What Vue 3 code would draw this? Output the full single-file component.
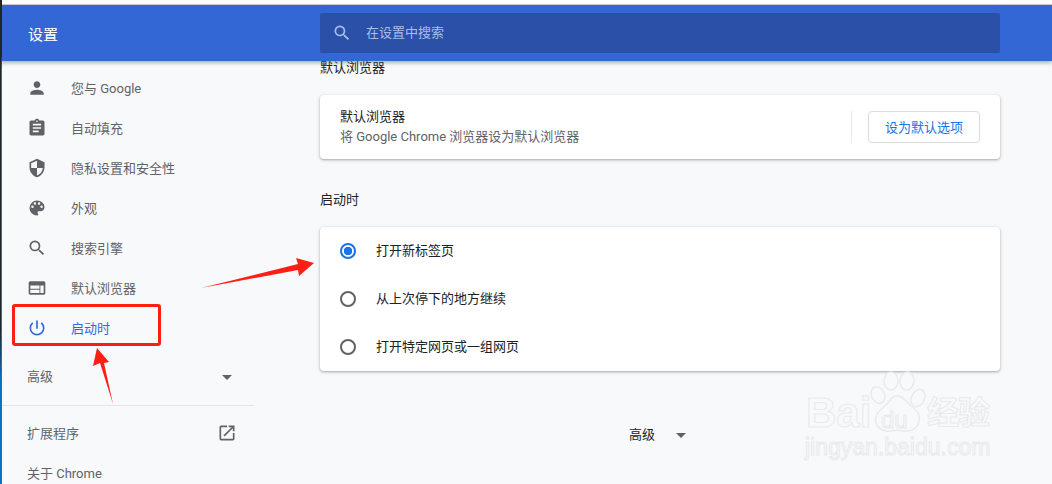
<template>
  <div class="page">
    <div class="edge"></div>
    <div class="top-strip"></div>
    <header class="header">
      <div class="header-title">设置</div>
      <div class="search">
        <svg class="search-icon" viewBox="0 0 24 24"><path d="M15.5 14h-.79l-.28-.27A6.47 6.47 0 0 0 16 9.5 6.5 6.5 0 1 0 9.5 16c1.61 0 3.09-.59 4.23-1.57l.27.28v.79l5 4.99L20.49 19l-4.99-5zm-6 0C7.01 14 5 11.99 5 9.5S7.01 5 9.5 5 14 7.01 14 9.5 11.99 14 9.5 14z"/></svg>
        <span class="lift-2">在设置中搜索</span>
      </div>
    </header>
    <div class="body">
      <aside class="sidebar">
        <div v-for="item in navItems" :key="item.label" class="nav-item" :class="{ active: item.active }">
          <svg class="nav-icon" viewBox="0 0 24 24"><path :d="item.icon"/></svg>
          <span class="lift-1">{{ item.label }}</span>
        </div>
        <div class="advanced-row">
          <span class="lift-1">高级</span>
          <i class="caret"></i>
        </div>
        <div class="divider"></div>
        <div class="link-row">
          <span class="lift-1">扩展程序</span>
          <svg class="open-icon" viewBox="0 0 24 24"><path d="M19 19H5V5h7V3H5a2 2 0 0 0-2 2v14a2 2 0 0 0 2 2h14c1.1 0 2-.9 2-2v-7h-2v7zM14 3v2h3.59l-9.83 9.83 1.41 1.41L19 6.41V10h2V3h-7z"/></svg>
        </div>
        <div class="link-row"><span class="lift-1">关于 Chrome</span></div>
      </aside>
      <main class="main">
        <div class="section-title first">默认浏览器</div>
        <section class="card browser-card">
          <div class="browser-text">
            <div class="browser-name">默认浏览器</div>
            <div class="browser-sub">将 Google Chrome 浏览器设为默认浏览器</div>
          </div>
          <div class="vline"></div>
          <button class="default-btn">设为默认选项</button>
        </section>
        <div class="section-title second">启动时</div>
        <section class="card">
          <div v-for="(opt, i) in startOptions" :key="opt" class="radio-row">
            <span class="radio" :class="{ checked: i === 0 }"></span>
            <span class="lift-2">{{ opt }}</span>
          </div>
        </section>
        <div class="main-advanced">
          <span class="lift-1">高级</span>
          <i class="caret"></i>
        </div>
      </main>
    </div>

    <!-- 标注和水印 -->
    <div class="red-box"></div>
    <svg class="marks" viewBox="0 0 1052 484">
      <polygon fill="#fb1f14" points="201,288 298,264 296,258 314,263 299,276 298,270"/>
      <polygon fill="#fb1f14" points="113,404 100,363 93,366 97,348 109,362 104,363"/>
    </svg>
    <div class="watermark">
      <svg class="paw" viewBox="0 0 60 60">
        <g fill="#f8f9fa" stroke="#e9eaec" stroke-width="1.5">
          <ellipse cx="12" cy="23" rx="6.5" ry="8.5" transform="rotate(-25 12 23)"/>
          <ellipse cx="25" cy="9" rx="7" ry="9"/>
          <ellipse cx="41" cy="9" rx="7" ry="9" transform="rotate(8 41 9)"/>
          <ellipse cx="52" cy="26" rx="6.5" ry="9" transform="rotate(25 52 26)"/>
          <path d="M31 24c6 0 9 5 14 10 5 4 10 8 8 16-2 8-10 10-16 9-4-1-8-1-12 0-7 1-13-2-15-8-2-8 4-13 9-17 5-4 6-10 12-10z"/>
        </g>
      </svg>
      <span class="wm-bai">Bai</span>
      <span class="wm-du">du</span>
      <span class="wm-jy">经验</span>
      <span class="wm-url">jingyan.baidu.com</span>
    </div>
  </div>
</template>

<script setup>
// 左侧菜单
const navItems = [
  { label: '您与 Google', icon: 'M12 12c2.21 0 4-1.79 4-4s-1.79-4-4-4-4 1.79-4 4 1.79 4 4 4zm0 2c-2.67 0-8 1.34-8 4v2h16v-2c0-2.66-5.33-4-8-4z' },
  { label: '自动填充', icon: 'M19 3h-4.18C14.4 1.84 13.3 1 12 1s-2.4.84-2.82 2H5c-1.1 0-2 .9-2 2v14c0 1.1.9 2 2 2h14c1.1 0 2-.9 2-2V5c0-1.1-.9-2-2-2zm-7 0c.55 0 1 .45 1 1s-.45 1-1 1-1-.45-1-1 .45-1 1-1zm2 14H7v-2h7v2zm3-4H7v-2h10v2zm0-4H7V7h10v2z' },
  { label: '隐私设置和安全性', icon: 'M12 1 3 5v6c0 5.55 3.84 10.74 9 12 5.16-1.26 9-6.45 9-12V5l-9-4zm0 10.99h7c-.53 4.12-3.28 7.79-7 8.94V12H5V6.3l7-3.11v8.8z' },
  { label: '外观', icon: 'M12 3a9 9 0 0 0 0 18c.83 0 1.5-.67 1.5-1.5 0-.39-.15-.74-.39-1.01-.23-.26-.38-.61-.38-.99 0-.83.67-1.5 1.5-1.5H16c2.76 0 5-2.24 5-5 0-4.42-4.03-8-9-8zm-5.5 9a1.5 1.5 0 1 1 0-3 1.5 1.5 0 0 1 0 3zm3-4a1.5 1.5 0 1 1 0-3 1.5 1.5 0 0 1 0 3zm5 0a1.5 1.5 0 1 1 0-3 1.5 1.5 0 0 1 0 3zm3 4a1.5 1.5 0 1 1 0-3 1.5 1.5 0 0 1 0 3z' },
  { label: '搜索引擎', icon: 'M15.5 14h-.79l-.28-.27A6.47 6.47 0 0 0 16 9.5 6.5 6.5 0 1 0 9.5 16c1.61 0 3.09-.59 4.23-1.57l.27.28v.79l5 4.99L20.49 19l-4.99-5zm-6 0C7.01 14 5 11.99 5 9.5S7.01 5 9.5 5 14 7.01 14 9.5 11.99 14 9.5 14z' },
  { label: '默认浏览器', icon: 'M20 4H4c-1.1 0-2 .9-2 2v12c0 1.1.9 2 2 2h16c1.1 0 2-.9 2-2V6c0-1.1-.9-2-2-2zm-5 14H4v-4h11v4zm0-5H4V9h11v4zm5 5h-4V9h4v9z' },
  { label: '启动时', active: true, icon: 'M13 3h-2v10h2V3zm4.83 2.17-1.42 1.42A6.92 6.92 0 0 1 19 12c0 3.87-3.13 7-7 7s-7-3.13-7-7c0-2.14.96-4.05 2.58-5.42L6.17 5.17A8.96 8.96 0 0 0 3 12a9 9 0 0 0 18 0c0-2.74-1.23-5.18-3.17-6.83z' },
];

const startOptions = ['打开新标签页', '从上次停下的地方继续', '打开特定网页或一组网页'];
</script>

<style>
html, body {
  margin: 0;
  background: #f8f9fa;
  overflow: hidden;
}
</style>

<style scoped>
.page {
  position: relative;
  width: 1052px;
  height: 484px;
  overflow: hidden;
  background: #f8f9fa;
  color: #202124;
  font-family: Roboto, "Noto Sans CJK SC", sans-serif;
  font-size: 13px;
}

/* 截图左边缘的窗口边框 */
.edge {
  position: absolute;
  left: 0;
  top: 0;
  bottom: 0;
  width: 2px;
  background:
    linear-gradient(#20262c 0 330px, #0d6fc0 380px) left / 1px 100% no-repeat,
    linear-gradient(#20262c 0 55px, #0d78c8 70px) right / 1px 100% no-repeat;
  z-index: 3;
}

.top-strip {
  height: 4px;
  background: #fff;
  border-bottom: 1px solid #cfd0d2;
}

.header {
  position: relative;
  z-index: 2;
  display: flex;
  align-items: center;
  height: 56px;
  background: #3367d6;
  box-shadow: 0 2px 4px rgba(60, 64, 67, 0.4);
}

.header-title {
  width: 320px;
  padding-left: 28px;
  box-sizing: border-box;
  color: #fff;
  font-size: 15px;
}

.search {
  display: flex;
  align-items: center;
  width: 680px;
  height: 40px;
  background: #2a50a8;
  border-radius: 2px;
  color: #a9bde8;
}

.search-icon {
  width: 20px;
  height: 20px;
  margin-left: 12px;
  margin-right: 14px;
  fill: #a9bde8;
}

.lift-1 {
  margin-bottom: 2px;
}

.lift-2 {
  margin-bottom: 4px;
}

.body {
  display: flex;
}

.sidebar {
  width: 254px;
  padding-top: 7px;
  padding-left: 2px;
  box-sizing: border-box;
  color: #5f6368;
  flex-shrink: 0;
}

.nav-item {
  display: flex;
  align-items: center;
  height: 40px;
  padding-left: 25px;
}

.nav-item.active {
  color: #2f6bd9;
}

.nav-icon {
  width: 20px;
  height: 20px;
  margin-right: 24px;
  fill: #5f6368;
  flex-shrink: 0;
}

.nav-item.active .nav-icon {
  fill: #2f6bd9;
}

.advanced-row {
  display: flex;
  align-items: center;
  justify-content: space-between;
  height: 40px;
  margin-top: 8px;
  padding: 0 22px 0 25px;
}

.caret {
  width: 0;
  height: 0;
  margin-top: 2px;
  border-left: 5px solid transparent;
  border-right: 5px solid transparent;
  border-top: 5px solid #5f6368;
}

.divider {
  height: 1px;
  margin-top: 9px;
  background: #e3e5e8;
}

.link-row {
  display: flex;
  align-items: center;
  justify-content: space-between;
  height: 40px;
  padding: 0 17px 0 25px;
  margin-top: 7px;
}

.link-row + .link-row {
  margin-top: 0;
}

.open-icon {
  width: 20px;
  height: 20px;
  fill: #5f6368;
}

.main {
  width: 680px;
  margin-left: 66px;
  flex-shrink: 0;
}

.section-title {
  line-height: 20px;
}

.section-title.first {
  margin-top: -3px;
  margin-bottom: 17px;
}

.section-title.second {
  margin-top: 31px;
  margin-bottom: 17px;
}

.card {
  background: #fff;
  border-radius: 4px;
  box-shadow: 0 1px 2px rgba(60, 64, 67, 0.3), 0 1px 3px 1px rgba(60, 64, 67, 0.12);
}

.browser-card {
  display: flex;
  align-items: center;
  height: 64px;
  padding: 0 20px;
}

.browser-text {
  flex: 1;
  line-height: 20px;
}

.browser-sub {
  color: #5f6368;
}

.vline {
  width: 1px;
  height: 32px;
  background: #e8eaed;
  margin-right: 16px;
}

.default-btn {
  width: 112px;
  height: 32px;
  padding: 0 0 2px;
  background: #fff;
  border: 1px solid #dadce0;
  border-radius: 4px;
  color: #1a73e8;
  font: inherit;
}

.radio-row {
  display: flex;
  align-items: center;
  height: 48px;
  padding-left: 20px;
}

.radio {
  width: 16px;
  height: 16px;
  margin-right: 20px;
  box-sizing: border-box;
  border: 2px solid #5f6368;
  border-radius: 50%;
  flex-shrink: 0;
}

.radio.checked {
  border-color: #1a73e8;
  background: radial-gradient(circle, #1a73e8 0 4px, #fff 4.5px);
}

.main-advanced {
  display: flex;
  align-items: center;
  margin-top: 43px;
  height: 40px;
  padding-left: 309px;
}

.main-advanced .caret {
  margin-left: 21px;
}

.red-box {
  position: absolute;
  left: 12px;
  top: 304px;
  width: 149px;
  height: 42px;
  box-sizing: border-box;
  border: 3px solid #fb1f14;
  border-radius: 3px;
  z-index: 4;
}

.marks {
  position: absolute;
  left: 0;
  top: 0;
  width: 1052px;
  height: 484px;
  z-index: 4;
}

.watermark {
  position: absolute;
  left: 806px;
  top: 372px;
  width: 210px;
  height: 96px;
  z-index: 4;
  color: #f8f9fa;
  font-family: "Liberation Sans", "Noto Sans CJK SC", sans-serif;
  font-weight: 700;
  -webkit-text-stroke: 1px #e9eaec;
}

.paw {
  position: absolute;
  left: 60px;
  top: 0;
  width: 60px;
  height: 60px;
  overflow: visible;
}

.wm-bai,
.wm-du,
.wm-jy,
.wm-url {
  position: absolute;
  white-space: nowrap;
}

.wm-bai {
  left: 0;
  top: 18px;
  font-size: 42px;
  line-height: 46px;
}

.wm-du {
  left: 75px;
  top: 34px;
  font-size: 24px;
  line-height: 28px;
  font-weight: 400;
}

.wm-jy {
  left: 121px;
  top: 22px;
  font-size: 32px;
  line-height: 38px;
  letter-spacing: -1px;
}

.wm-url {
  left: -1px;
  top: 62px;
  font-size: 23px;
  line-height: 26px;
  font-weight: 400;
}
</style>
